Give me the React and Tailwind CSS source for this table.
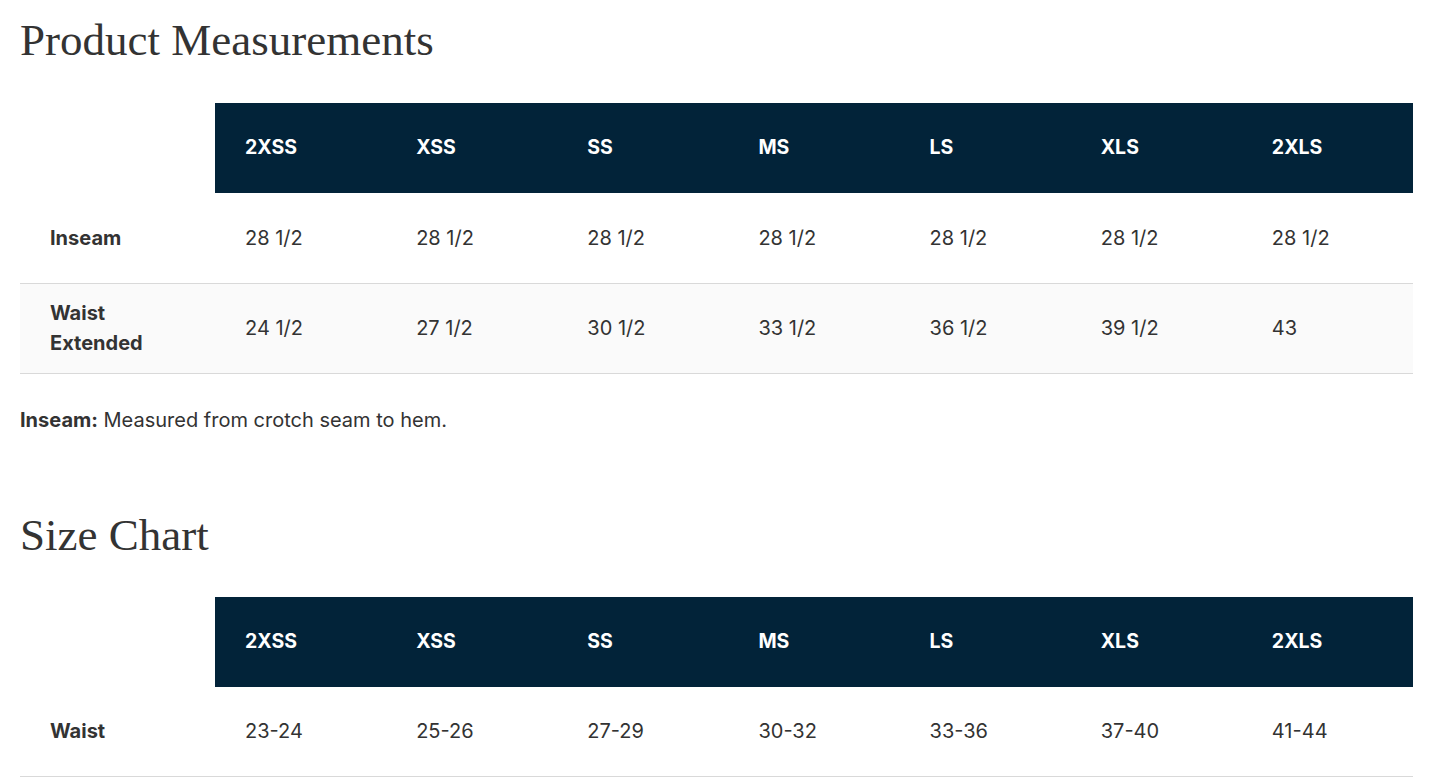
import React from 'react';

const sizes = ['2XSS', 'XSS', 'SS', 'MS', 'LS', 'XLS', '2XLS'];

const measurements = [
  { label: 'Inseam', values: ['28 1/2', '28 1/2', '28 1/2', '28 1/2', '28 1/2', '28 1/2', '28 1/2'] },
  { label: ['Waist', 'Extended'], values: ['24 1/2', '27 1/2', '30 1/2', '33 1/2', '36 1/2', '39 1/2', '43'] },
];

const sizeChart = [
  { label: 'Waist', values: ['23-24', '25-26', '27-29', '30-32', '33-36', '37-40', '41-44'] },
];

const SizeTable = ({ rows }) => (
  <table className="w-full table-fixed border-collapse">
    <colgroup>
      <col className="w-[195px]" />
      {sizes.map((s) => (
        <col key={s} />
      ))}
    </colgroup>
    <thead>
      <tr className="h-[90px]">
        <th className="bg-white" />
        {sizes.map((s) => (
          <th key={s} className="bg-[#022339] text-white text-left font-bold text-[19.5px] pl-[30px]">
            {s}
          </th>
        ))}
      </tr>
    </thead>
    <tbody>
      {rows.map((row, i) => (
        <tr key={i} className={`h-[90px] border-b border-[#d9d9d9] ${i % 2 === 1 ? 'bg-[#fafafa]' : 'bg-white'}`}>
          <td className="pl-[30px] font-bold text-[20px] leading-[30px] text-[#333]">
            {Array.isArray(row.label)
              ? row.label.map((l) => <div key={l}>{l}</div>)
              : row.label}
          </td>
          {row.values.map((v, j) => (
            <td key={j} className="pl-[30px] text-[20px] leading-[30px] text-[#333]">
              {v}
            </td>
          ))}
        </tr>
      ))}
    </tbody>
  </table>
);

export default function App() {
  return (
    <div className="min-h-screen bg-white px-5 pr-[25px] font-['Inter',sans-serif] text-[#333]">
      <h2 className="pt-[10px] text-[45px] leading-[60px] font-['Liberation_Serif',serif] text-[#333]">
        Product Measurements
      </h2>
      <div className="mt-[33px]">
        <SizeTable rows={measurements} />
      </div>
      <p className="mt-[31px] text-[20px] leading-[30px]">
        <strong className="font-bold">Inseam:</strong> Measured from crotch seam to hem.
      </p>
      <h2 className="mt-[70px] text-[45px] leading-[60px] font-['Liberation_Serif',serif] text-[#333]">
        Size Chart
      </h2>
      <div className="mt-[32px]">
        <SizeTable rows={sizeChart} />
      </div>
    </div>
  );
}
